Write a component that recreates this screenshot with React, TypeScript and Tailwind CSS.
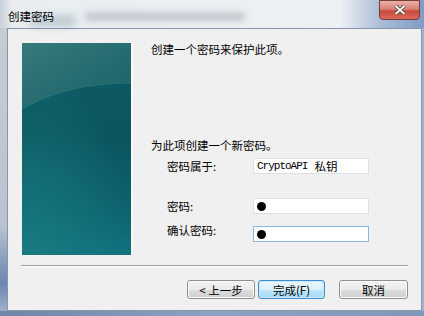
import React from 'react';

const cjk = '[font-family:"Noto_Sans_CJK_SC","Noto_Sans",sans-serif]';

const Watermark: React.FC = () => (
  <svg width="109" height="212" viewBox="0 0 109 212" className="block">
    <defs>
      <linearGradient id="base" x1="0" y1="0" x2="0" y2="1">
        <stop offset="0" stopColor="#0f5d66" />
        <stop offset="0.45" stopColor="#0a5560" />
        <stop offset="0.8" stopColor="#0d6370" />
        <stop offset="1" stopColor="#127280" />
      </linearGradient>
      <linearGradient id="top" x1="0" y1="0" x2="1" y2="1">
        <stop offset="0" stopColor="#367b7c" />
        <stop offset="0.6" stopColor="#236a6e" />
        <stop offset="1" stopColor="#1b6268" />
      </linearGradient>
      <radialGradient id="glow" cx="0.1" cy="1" r="0.9">
        <stop offset="0" stopColor="#1a7c80" stopOpacity="0.8" />
        <stop offset="1" stopColor="#1a7c80" stopOpacity="0" />
      </radialGradient>
    </defs>
    <rect width="109" height="212" fill="url(#base)" />
    <rect width="109" height="212" fill="url(#glow)" />
    <path d="M0 0 H109 V40 Q45 40 0 66 Z" fill="url(#top)" />
    <path d="M0 66 Q45 40 109 40" stroke="#3a8686" strokeOpacity="0.4" fill="none" />
  </svg>
);

const Field: React.FC<{ focused?: boolean; children?: React.ReactNode }> = ({ focused, children }) => (
  <div
    className={`w-[116px] h-[16px] bg-white border flex items-center pl-[2px] ${
      focused ? 'border-[#8db6df]' : 'border-[#dcdfe3]'
    }`}
  >
    {children}
  </div>
);

const Dot = () => <span className="block w-[9px] h-[9px] rounded-full bg-black ml-[1px]" />;

const Btn: React.FC<{ w: string; primary?: boolean; children: React.ReactNode }> = ({ w, primary, children }) => (
  <button
    className={`${w} h-[19px] rounded-[3px] border text-[11.5px] leading-[12px] text-black flex items-center justify-center ${cjk} ${
      primary
        ? 'border-[#3c8ed3] bg-[linear-gradient(#eaf6fd_0%,#d9f0fc_50%,#bee6fd_51%,#a7d9f5_100%)] shadow-[inset_0_0_0_1px_#c9e8fb]'
        : 'border-[#8e8f8f] bg-[linear-gradient(#f2f2f2_0%,#ebebeb_50%,#dddddd_51%,#cfcfcf_100%)] shadow-[inset_0_0_0_1px_#fcfcfc]'
    }`}
  >
    {children}
  </button>
);

export default function App() {
  return (
    <div className={`w-[424px] h-[316px] flex flex-col overflow-hidden bg-[linear-gradient(90deg,#c9d1da_0%,#e9edf1_3%,#eef1f4_80%,#a9bcd6_90%,#7f9cc6_100%)] ${cjk}`}>
      {/* title bar */}
      <div className="relative h-[28px] flex items-start">
        <div className="absolute left-[85px] top-[12px] w-[160px] h-[9px] bg-[#9aa3ad] opacity-50 blur-[3px]" />
        <div className="absolute left-[30px] top-[16px] w-[45px] h-[10px] bg-[#6c8f96] opacity-40 blur-[4px]" />
        <span className="relative ml-[8px] mt-[9px] text-[11.5px] leading-[14px] text-black">创建密码</span>
        <div className="absolute left-[379px] top-0 w-[41px] h-[20px] rounded-b-[4px] border border-[#7a3b3b] bg-[linear-gradient(#eab0a8_0%,#d9827a_45%,#c9493e_55%,#d9695b_100%)] flex items-center justify-center">
          <svg width="12" height="10" viewBox="0 0 12 10">
            <path d="M1.5 1 L10.5 9 M10.5 1 L1.5 9" stroke="#3a2b2b" strokeWidth="3.4" />
            <path d="M1.5 1 L10.5 9 M10.5 1 L1.5 9" stroke="#ffffff" strokeWidth="2" />
          </svg>
        </div>
      </div>

      {/* client area */}
      <div className="flex-1 flex">
        <div className="w-[7px] bg-[linear-gradient(#c5ccd4_0%,#b9c3cf_70%,#6a86b2_90%,#9fb0c9_100%)]" />
        <div className="w-[415px] h-[283px] border border-[#8796a8] bg-[#f0f0f0] flex flex-col">
          <div className="flex ml-[14px] mt-[14px] h-[212px]">
            <div className="border-r-2 border-[#f8f8f8]">
              <Watermark />
            </div>
            <div className="ml-[18px] flex flex-col text-[11.5px] leading-[12px] text-black">
              <div>创建一个密码来保护此项。</div>
              <div className="mt-[84px]">为此项创建一个新密码。</div>
              <div className="mt-[7px] flex items-center">
                <span className="w-[102px] pl-[16px]">密码属于:</span>
                <Field>
                  <span className="[font-family:'Liberation_Mono',monospace] text-[11px] tracking-[-1px] ml-[1px]">CryptoAPI</span>
                  <span className="ml-[7px]">私钥</span>
                </Field>
              </div>
              <div className="mt-[24px] flex items-center">
                <span className="w-[102px] pl-[16px]">密码:</span>
                <Field>
                  <Dot />
                </Field>
              </div>
              <div className="mt-[12px] flex items-start">
                <span className="w-[102px] pl-[16px] mt-[-2px]">确认密码:</span>
                <Field focused>
                  <Dot />
                </Field>
              </div>
            </div>
          </div>

          <div className="mx-[13px] mt-[10px] h-[2px] border-t border-[#a0a0a0] bg-white" />

          <div className="flex justify-end mr-[13px] mt-[13px]">
            <Btn w="w-[68px]">&lt; 上一步</Btn>
            <div className="w-[3px]" />
            <Btn w="w-[67px]" primary>
              完成(F)
            </Btn>
            <div className="w-[14px]" />
            <Btn w="w-[69px]">取消</Btn>
          </div>
        </div>
        <div className="flex-1 bg-[#9cb3d3]" />
      </div>
      <div className="h-[5px] bg-[linear-gradient(90deg,#6f86a8,#8ca2c2_50%,#7f97bb)]" />
    </div>
  );
}
